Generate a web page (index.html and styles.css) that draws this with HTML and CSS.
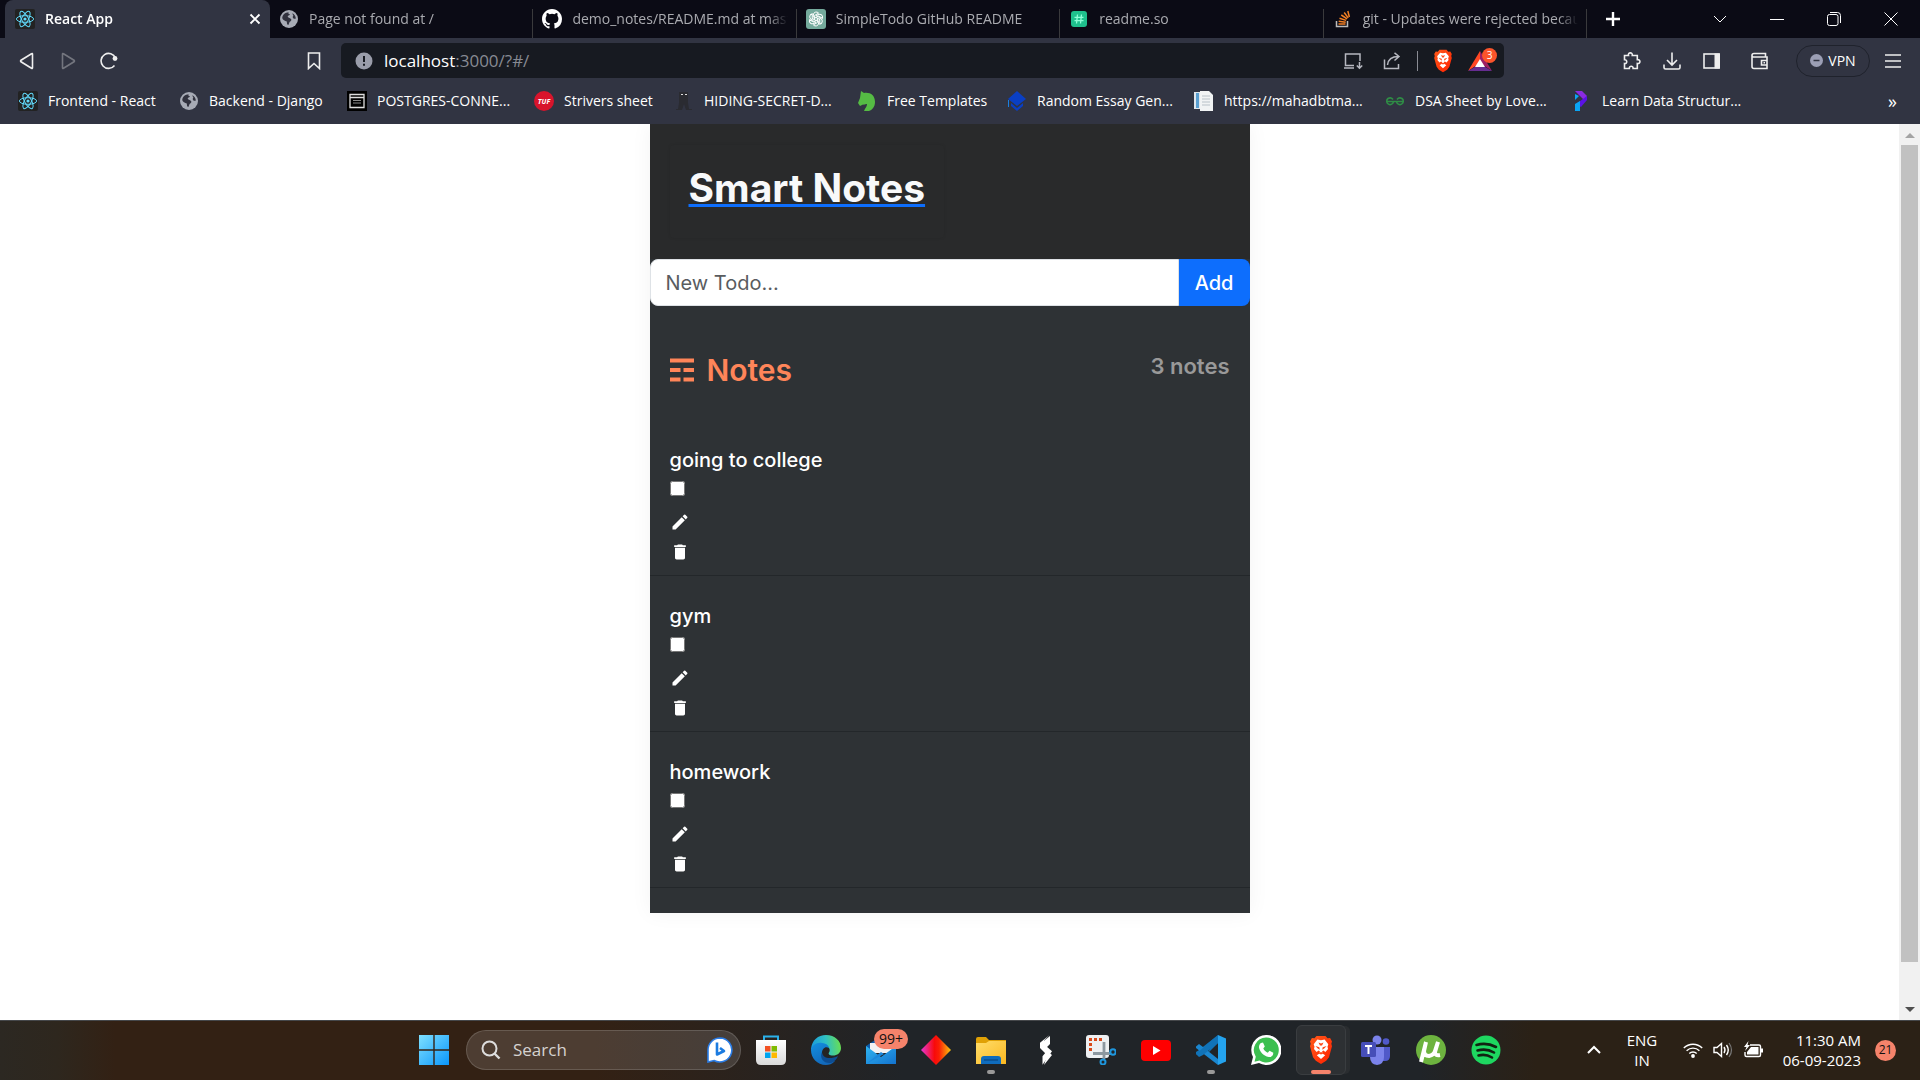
FILE: index.html
```html
<!DOCTYPE html>
<html lang="en">
<head>
<meta charset="utf-8">
<title>React App</title>
<link rel="stylesheet" href="styles.css">
</head>
<body>
<svg class="sprite" width="0" height="0" aria-hidden="true">
  <defs>
    <linearGradient id="winblue" x1="0" y1="0" x2="1" y2="1"><stop offset="0" stop-color="#7fe0ff"/><stop offset="1" stop-color="#0a96fb"/></linearGradient>
    <linearGradient id="edge-a" x1="0" y1="0.4" x2="1" y2="0.3"><stop offset="0" stop-color="#1a9bdc"/><stop offset="0.5" stop-color="#2fc0c4"/><stop offset="1" stop-color="#6be04d"/></linearGradient>
    <linearGradient id="edge-b" x1="0" y1="0" x2="0.6" y2="1"><stop offset="0" stop-color="#1390e0"/><stop offset="1" stop-color="#1266b8"/></linearGradient>
    <linearGradient id="gem" x1="0" y1="0" x2="1" y2="0"><stop offset="0" stop-color="#e438d8"/><stop offset="0.45" stop-color="#f80a0a"/><stop offset="0.6" stop-color="#fa1d05"/><stop offset="1" stop-color="#f9c80e"/></linearGradient>
    <linearGradient id="folder" x1="0" y1="0" x2="1" y2="1"><stop offset="0" stop-color="#ffdd6b"/><stop offset="1" stop-color="#fbb820"/></linearGradient>
    <linearGradient id="mail" x1="0" y1="0" x2="1" y2="1"><stop offset="0" stop-color="#2fb4f0"/><stop offset="1" stop-color="#1373cf"/></linearGradient>
    <linearGradient id="flame" x1="0" y1="0" x2="1" y2="1"><stop offset="0" stop-color="#ff5a1a"/><stop offset="1" stop-color="#ff2000"/></linearGradient>
    <linearGradient id="bag" x1="0" y1="0" x2="0" y2="1"><stop offset="0" stop-color="#ffffff"/><stop offset="1" stop-color="#dadada"/></linearGradient>
  </defs>
  <symbol id="react" viewBox="0 0 20 20">
    <rect width="20" height="20" rx="2" fill="#222"/>
    <g fill="none" stroke="#61dafb" stroke-width="1"><ellipse cx="10" cy="10" rx="8.6" ry="3.3"/><ellipse cx="10" cy="10" rx="8.6" ry="3.3" transform="rotate(60 10 10)"/><ellipse cx="10" cy="10" rx="8.6" ry="3.3" transform="rotate(120 10 10)"/></g>
    <circle cx="10" cy="10" r="1.6" fill="#61dafb"/>
  </symbol>
  <symbol id="globe" viewBox="0 0 20 20">
    <circle cx="10" cy="10" r="9" fill="#a7abb5"/>
    <path d="M10 3.2C8.5 3.5 9.4 5 11 5.2c-.2 1.3-2.3 1-2.3 2.4C8.8 9 11 8.8 12 10c1 1.100 0 2.200-1.200 2.800-.8.6-.6 2.600-1.600 3.200-1.400 0-1.200-2.200-1.400-3.400C5.800 12 4 11 3.300 9.300 3.100 5.900 6.200 3.100 10 3.200zM13.500 4.200c2 1 3.300 3 3.300 5.300-1.300.6-2.600.2-3-1-.2-1.500.8-1.700.4-2.500-.4-.6-1-1-.7-1.800z" fill="#31323e"/>
  </symbol>
  <symbol id="lion" viewBox="0 0 24 30">
    <path d="M7.500 1h9l2 2.300 2.600-.3 1.900 3.400-.7 2.300.7 2.600-3 11-2.800 3.500L12 29l-5.200-3.200L4 22.300 1 11.300l.7-2.600L1 6.400 2.900 3l2.600.3z" fill="url(#flame)"/>
    <path d="M12 5.200l3.600-.6 3.700 4.600-.8 2.600.5 2.100-2.600 3.100-2-1.500-1.200.8.200 2.200 2.800 1.700L12 24l-4.200-3.800 2.800-1.700.2-2.200-1.200-.8-2 1.500L5 13.900l.5-2.100-.8-2.600 3.700-4.600z" fill="#fff"/>
    <path d="M6.500 11l3.800 1.200.5 2.600-2.300-1.600zM17.500 11l-3.800 1.200-.5 2.600 2.300-1.600zM9.500 7.500L12 8.500l2.500-1-1.500 3h-2zM12 17l2.500 1.200L12 19.500l-2.500-1.300z" fill="#ff4514"/>
  </symbol>
  <symbol id="pencil" viewBox="0 0 24 24"><path fill="#fff" d="M3 17.250V21h3.750L17.810 9.940l-3.750-3.750L3 17.250zM20.710 7.040a1 1 0 000-1.410l-2.340-2.340a1 1 0 00-1.410 0l-1.830 1.830 3.750 3.750 1.830-1.830z"/></symbol>
  <symbol id="trash" viewBox="0 0 24 24"><path fill="#fff" d="M6 19c0 1.100.9 2 2 2h8c1.100 0 2-.9 2-2V7H6v12zM19 4h-3.500l-1-1h-5l-1 1H5v2h14V4z"/></symbol>
</svg>

<header class="browser">
  <div class="tabstrip">
    <div class="tabs">
      <div class="tab tab-active"><svg class="fav"><use href="#react"/></svg><span class="tab-title">React App</span>
        <button class="tab-close" aria-label="Close tab"><svg width="12" height="12" viewBox="0 0 12 12"><path d="M1.500 1.500l9 9M10.500 1.500l-9 9" stroke="#fff" stroke-width="1.900"/></svg></button></div>
      <div class="tab"><svg class="fav"><use href="#globe"/></svg><span class="tab-title">Page not found at /</span></div>
      <div class="tab"><svg class="fav" viewBox="0 0 16 16"><path fill="#fff" d="M8 0C3.580 0 0 3.580 0 8c0 3.540 2.290 6.530 5.470 7.590.4.070.55-.17.55-.38 0-.19-.010-.82-.010-1.490-2.010.37-2.530-.49-2.690-.94-.090-.23-.48-.94-.82-1.130-.28-.15-.68-.52-.010-.53.63-.010 1.080.58 1.230.82.72 1.210 1.870.87 2.330.66.070-.52.280-.87.510-1.070-1.780-.2-3.640-.89-3.640-3.950 0-.87.310-1.590.820-2.150-.080-.2-.36-1.020.080-2.120 0 0 .67-.21 2.200.82a7.600 7.600 0 014 0c1.530-1.040 2.200-.82 2.200-.82.44 1.100.16 1.920.080 2.120.51.56.82 1.270.82 2.150 0 3.070-1.870 3.750-3.650 3.950.29.25.54.73.54 1.480 0 1.070-.010 1.930-.010 2.200 0 .21.15.46.55.38A8.010 8.010 0 0016 8c0-4.420-3.580-8-8-8z"/></svg><span class="tab-title">demo_notes/README.md at master</span></div>
      <div class="tab"><svg class="fav" viewBox="0 0 20 20"><rect width="20" height="20" rx="3" fill="#74aa9c"/><g fill="none" stroke="#fff" stroke-width="1"><g id="petal"><path d="M7.300 8.500V6a3 3 0 015.300-1.900L8.600 6.500v4.300"/></g><use href="#petal" transform="rotate(60 10 10)"/><use href="#petal" transform="rotate(120 10 10)"/><use href="#petal" transform="rotate(180 10 10)"/><use href="#petal" transform="rotate(240 10 10)"/><use href="#petal" transform="rotate(300 10 10)"/></g></svg><span class="tab-title">SimpleTodo GitHub README</span></div>
      <div class="tab"><svg class="fav" viewBox="0 0 20 20"><rect x="2" y="2" width="16" height="16" rx="3" fill="#1fc08d"/><path d="M8.500 5.500l-1 9M12.500 5.500l-1 9M5.500 8.300h9M5.500 11.700h9" stroke="#8dffd8" stroke-width="1.300"/></svg><span class="tab-title">readme.so</span></div>
      <div class="tab"><svg class="fav" viewBox="0 0 20 20"><path d="M3.500 12v5.500h11V12" fill="none" stroke="#bcbbbb" stroke-width="1.500"/><path d="M5.500 15h7M5.700 12.300l7 .9M6.500 9.200l6.600 2.200M8.300 6l5.800 3.800M11.200 3.500l4 5.400M14.800 2l1.600 6" stroke="#f48024" stroke-width="1.500"/></svg><span class="tab-title">git - Updates were rejected because</span></div>
    </div>
    <button class="newtab" aria-label="New tab"><svg width="16" height="16" viewBox="0 0 16 16"><path d="M8 1v14M1 8h14" stroke="#fff" stroke-width="2.400"/></svg></button>
    <div class="winctl">
      <button aria-label="Search tabs"><svg width="14" height="14" viewBox="0 0 14 14"><path d="M1 4l6 6 6-6" class="thin"/></svg></button>
      <button aria-label="Minimize"><svg width="14" height="14" viewBox="0 0 14 14"><path d="M0 7.500h14" class="thin"/></svg></button>
      <button aria-label="Restore"><svg width="14" height="14" viewBox="0 0 14 14"><rect x=".5" y="2.500" width="10.500" height="11" rx="2" class="thin"/><path d="M3 .5h7.500a3 3 0 013 3V11" class="thin"/></svg></button>
      <button aria-label="Close"><svg width="14" height="14" viewBox="0 0 14 14"><path d="M.5.500l13 13M13.500.500l-13 13" class="thin"/></svg></button>
    </div>
  </div>

  <div class="toolbar">
    <div class="nav">
      <button aria-label="Back"><svg width="18" height="18" viewBox="0 0 18 18"><path d="M14.500 2.200v13.600q0 1-1 .5L3 9.800q-.9-.8 0-1.600L13.500 1.700q1-.5 1 .5z" class="line"/></svg></button>
      <button aria-label="Forward" class="dim"><svg width="18" height="18" viewBox="0 0 18 18"><path d="M3.500 2.200v13.600q0 1 1 .5L15 9.800q.9-.8 0-1.600L4.500 1.700q-1-.5-1 .5z" class="line"/></svg></button>
      <button aria-label="Reload"><svg width="18" height="18" viewBox="0 0 18 18"><path d="M14.500 13.500A7.500 7.500 0 1 1 15.500 6" class="line"/><circle cx="15" cy="6.500" r="2.400" fill="#eee"/></svg></button>
    </div>
    <button class="bm" aria-label="Bookmark this tab"><svg width="14" height="18" viewBox="0 0 14 18"><path d="M1.500 1h11v15.500L7 11.500l-5.500 5z" class="line"/></svg></button>
    <div class="omnibox">
      <svg width="18" height="18" viewBox="0 0 18 18"><circle cx="9" cy="9" r="8.500" fill="#9a9daa"/><path d="M9 4v6M9 11.800v2" stroke="#171a21" stroke-width="2"/></svg>
      <div class="url"><span class="host">localhost</span>:3000/?#/</div>
      <div class="omni-actions">
        <svg width="20" height="18" viewBox="0 0 20 18"><path d="M17 9V2H2.500v11.500H11M1 16h10M16.500 10v6M13.800 13.500l2.700 2.700 2.700-2.700" class="soft"/></svg>
        <svg width="20" height="18" viewBox="0 0 20 18"><path d="M2.500 7.500v9h14V12M5.500 13c.5-5 3.500-8.500 11-8.500M12.500.8l4.500 3.700-4.500 4" class="soft"/></svg>
        <i class="divider"></i>
        <svg width="20" height="24" viewBox="0 0 24 30"><use href="#lion"/></svg>
        <div class="rewards"><svg width="24" height="20" viewBox="0 0 24 20"><path d="M12 0L0 20l12-8z" fill="#ff4724"/><path d="M12 0l12 20-12-8z" fill="#9e1f63"/><path d="M0 20h24l-12-7z" fill="#662d91"/><path d="M12 8l5 8H7z" fill="#fff"/></svg><span class="count">3</span></div>
      </div>
    </div>
    <div class="tools">
      <svg width="20" height="20" viewBox="0 0 20 20"><path d="M2.500 4.500h4c-1-3.500 4.500-3.500 3.800 0h5v4.200c3.500-.5 3.500 4.300 0 3.800v5h-4.200c.3-3-4-3-3.800 0H2.500v-5c3 .4 3-4 0-3.800z" class="line"/></svg>
      <svg width="20" height="20" viewBox="0 0 20 20"><path d="M10 1.500v12M5 9l5 5 5-5M2 13.500v3q0 1.500 1.500 1.500h13q1.500 0 1.500-1.500v-3" class="line"/></svg>
      <svg width="20" height="20" viewBox="0 0 20 20"><rect x="2" y="3" width="15" height="14" class="line"/><path d="M12.500 2.500H18v15h-5.500z" fill="#eee"/></svg>
      <svg class="wallet" width="20" height="20" viewBox="0 0 20 20"><path d="M2 4v11.500q0 2 2 2h13V6H3.500Q2 6 2 4.200 2 2.500 4 2.500h11.500V6M17 9.500h-5.500v4.500H17M13.500 11.700h1.500" class="line"/></svg>
      <button class="vpn"><svg width="13" height="13" viewBox="0 0 13 13"><circle cx="6.500" cy="6.500" r="6.500" fill="#9c9fb5"/><path d="M3.500 6.500h6" stroke="#313442" stroke-width="1.500"/></svg>VPN</button>
      <svg width="18" height="18" viewBox="0 0 18 18"><path d="M1 3h16M1 9h16M1 15h16" class="line"/></svg>
    </div>
  </div>

  <nav class="bookmarks">
    <a href="#"><svg class="fav"><use href="#react"/></svg>Frontend - React</a>
    <a href="#"><svg class="fav"><use href="#globe"/></svg>Backend - Django</a>
    <a href="#"><svg class="fav" viewBox="0 0 20 20"><path d="M0 0h20v20H0z" fill="#000"/><path d="M3 3.500h14v13H3zM3 6.500h14" fill="none" stroke="#ddd" stroke-width="1.300"/><path d="M6 9.500h8M6 12h8" stroke="#888" stroke-width="1"/></svg>POSTGRES-CONNE...</a>
    <a href="#"><svg class="fav" viewBox="0 0 20 20"><circle cx="10" cy="10" r="10" fill="#d8142c"/><text x="10" y="12.500" class="tuf">TUF</text></svg>Strivers sheet</a>
    <a href="#"><svg class="fav" viewBox="0 0 20 20"><path d="M5 1h9v11l1 6h3v1h-6l-2-6-2 6H2v-1h2l1-6z" fill="#2a2b31"/><path d="M7 3.500h2M11 3.500h2" stroke="#ddd" stroke-width="1.200"/></svg>HIDING-SECRET-D...</a>
    <a href="#"><svg class="fav" viewBox="0 0 20 20"><path d="M4 0l3 2c6-1 11 2 11 9 0 5-3 8-6 9H7c1-3 3-4 3-7-1 0-3 1-4 .5L3 15l-2-3 2-5z" fill="#55bb44"/></svg>Free Templates</a>
    <a href="#"><svg class="fav" viewBox="0 0 20 20"><path d="M10 0l9 8-9 7-9-7zM4 12l6 5 6-5v3l-6 5-6-5z" fill="#0a3fc4"/><path d="M1.500 9v7" stroke="#1a7fe0"/></svg>Random Essay Gen...</a>
    <a href="#"><svg class="fav" viewBox="0 0 20 20"><path d="M0 1h14v17H0z" fill="#dfe6ec"/><path d="M2 2h3v15H2z" fill="#5a9fd0"/><path d="M6 0h9l4 4v16H6z" fill="#f1f3f4"/><path d="M8 5h8M8 8h8M8 11h8M8 14h8" stroke="#b8c1c8"/></svg>https://mahadbtma...</a>
    <a href="#"><svg class="fav" viewBox="0 0 20 20"><path d="M1 10.500h18M8.500 10.500a3.400 3.400 0 11-5.500-3q3-1.500 5 1M11.500 10.500a3.400 3.400 0 105.500-3q-3-1.500-5 1" fill="none" stroke="#2f8d46" stroke-width="1.600"/></svg>DSA Sheet by Love...</a>
    <a href="#"><svg class="fav" viewBox="0 0 20 20"><path d="M3 0h7l5 5-3 4z" fill="#8a2be2"/><path d="M15 5v4l-6 7-5-3z" fill="#5b12e6"/><path d="M3 13l5-3v10H3z" fill="#0aa5f5"/><path d="M3 3l4 2-4 4z" fill="#0aa5f5"/></svg>Learn Data Structur...</a>
    <button class="more" aria-label="More bookmarks">»</button>
  </nav>
</header>

<div class="viewport">
  <main class="page">
    <section class="card">
      <div class="hero"><div class="brand"><h1>Smart Notes</h1></div></div>
      <form class="add">
        <input type="text" placeholder="New Todo..." aria-label="New Todo">
        <button type="button">Add</button>
      </form>
      <div class="heading">
        <h2><svg width="24" height="24" viewBox="0 0 24 24"><path d="M0 2.500h24M0 12h10.500M13.500 12H24M0 21.500h10.500M13.500 21.500H24" stroke="#ff8559" stroke-width="4"/></svg>Notes</h2>
        <p>3 notes</p>
      </div>
      <ul class="notes">
        <li><label for="n1">going to college</label><input type="checkbox" id="n1"><button aria-label="Edit"><svg class="ico"><use href="#pencil"/></svg></button><button aria-label="Delete"><svg class="ico"><use href="#trash"/></svg></button></li>
        <li><label for="n2">gym</label><input type="checkbox" id="n2"><button aria-label="Edit"><svg class="ico"><use href="#pencil"/></svg></button><button aria-label="Delete"><svg class="ico"><use href="#trash"/></svg></button></li>
        <li><label for="n3">homework</label><input type="checkbox" id="n3"><button aria-label="Edit"><svg class="ico"><use href="#pencil"/></svg></button><button aria-label="Delete"><svg class="ico"><use href="#trash"/></svg></button></li>
      </ul>
    </section>
  </main>
  <div class="scrollbar">
    <svg width="10" height="6" viewBox="0 0 10 6"><path d="M5 0l5 5H0z" fill="#a3a3a3"/></svg>
    <div class="thumb"></div>
    <svg width="10" height="6" viewBox="0 0 10 6"><path d="M0 0h10L5 5z" fill="#505050"/></svg>
  </div>
</div>

<footer class="taskbar">
  <div class="apps">
    <svg class="app" viewBox="0 0 30 30"><path d="M0 0h14.300v14.300H0zM15.700 0H30v14.300H15.700zM0 15.700h14.300V30H0zM15.700 15.700H30V30H15.700z" fill="url(#winblue)"/></svg>
    <label class="search"><svg width="20" height="20" viewBox="0 0 20 20"><circle cx="8.500" cy="8.500" r="7" fill="none" stroke="#ddd" stroke-width="2"/><path d="M13.500 13.500l5 5" stroke="#ddd" stroke-width="2.400"/></svg>
      <input type="text" placeholder="Search" aria-label="Search">
      <svg width="26" height="26" viewBox="0 0 26 26"><path d="M13 1a12 12 0 11-6 22.500L1 25V13A12 12 0 0113 1z" fill="#fff" stroke="#2a7de8" stroke-width="1.600"/><path d="M10 5.500v12l7-3.500-4-3" fill="none" stroke="#1b7be0" stroke-width="2.600" stroke-linejoin="round"/></svg></label>
    <svg class="app" viewBox="0 0 30 30"><path d="M8 6V1.500h14V6" fill="none" stroke="#2bb1ea" stroke-width="2"/><path d="M0 5h30v20q0 5-5 5H5q-5 0-5-5z" fill="url(#bag)"/><path d="M9 11h5.500v5.500H9z" fill="#f25022"/><path d="M15.500 11H21v5.500h-5.500z" fill="#7fba00"/><path d="M9 17.500h5.500V23H9z" fill="#00a4ef"/><path d="M15.500 17.500H21V23h-5.500z" fill="#ffb900"/></svg>
    <svg class="app" viewBox="0 0 30 30"><path d="M0 14C1 5 7 0 15 0c9 0 15 6 15 13 0 5-4 7.500-8 7.500-4 0-5-1.500-4-3 1.500-2 1-6-4-7C8 9 2 11 0 16z" fill="url(#edge-a)"/><path d="M0 15c1-5 6-8 11-7 5 .5 7 3 7 5-4-2-7 1-7 5 0 6 6 9.500 13 8-3 3-6 4-9 4C6 30 0 23 0 15z" fill="url(#edge-b)"/><path d="M11 17c0 6 8 8 16 4-1 3-4 6-7 7-7 1-12-5-9-11z" fill="#0d4d92"/></svg>
    <div class="app badge-host"><svg class="app" viewBox="0 0 30 30"><path d="M0 11L15 1l15 10v5H0z" fill="#0c5cab"/><path d="M4 8h22v10H4z" fill="#f2f2f2"/><path d="M0 11l15 11 15-11v18H0z" fill="url(#mail)"/><path d="M0 29l15-12 3 2z" fill="#1b87dc"/></svg><span class="badge">99+</span></div>
    <svg class="app" viewBox="0 0 30 30"><path d="M15 0l15 15-15 15L0 15z" fill="url(#gem)"/></svg>
    <div class="app run"><svg class="app" viewBox="0 0 30 30"><path d="M0 4q0-2 2-2h8l3 3H30v6H0z" fill="#e0a106"/><path d="M0 8h10l3-2h17v23H0z" fill="url(#folder)"/><path d="M5 29v-5q0-3 3-3h14q3 0 3 3v5z" fill="#0f6cbd"/><path d="M8 25h14" stroke="#083f76"/></svg></div>
    <svg class="app" viewBox="0 0 30 30"><path d="M18.500 0L13 6.500V11L21 19l-9.500 16V25l3.500-5-6-6V9z" transform="scale(1 .85)" fill="#fff"/><path d="M19 1v8l-5 5 7 6-8 10 3-10-7-7V9z" fill="#fff"/></svg>
    <svg class="app" viewBox="0 0 30 30"><rect width="23" height="23" rx="3" fill="#eef0f2"/><path d="M4.500 16V4.500H17" fill="none" stroke="#d84a1b" stroke-width="3" stroke-dasharray="3 2"/><path d="M18 7v17M7 18.500h18" stroke="#8d98a0" stroke-width="2.800"/><circle cx="27" cy="17" r="2.700" fill="none" stroke="#1e96dd" stroke-width="2"/><circle cx="17" cy="27" r="2.500" fill="none" stroke="#1e96dd" stroke-width="2"/></svg>
    <svg class="app" viewBox="0 0 30 30"><rect y="5" width="30" height="21" rx="4" fill="#f00"/><path d="M12 11l7.500 4.500L12 20z" fill="#fff"/></svg>
    <div class="app run"><svg class="app" viewBox="0 0 30 30"><path d="M22 0L7 17l-4 4-3-2v-2l3-2L22 0v8L11 19z" fill="#1173b8"/><path d="M0 11.500L3 9l4 3 15 12v6L0 13z" fill="#1a86cf"/><path d="M22 0v8L7 20l-4 2-3-3z" fill="#1173b8"/><path d="M22 0l8 3.500v23L22 30z" fill="#24a3ee"/></svg></div>
    <svg class="app" viewBox="0 0 30 30"><path d="M15 0a15 15 0 11-7 28L0 30l2-8A15 15 0 0115 0z" fill="#fff"/><path d="M15 2.500A12.500 12.500 0 118.500 25.500l-5 1.200 1.300-5A12.500 12.500 0 0115 2.500z" fill="#3cbf50"/><path d="M10 8l2-.5 1.800 4-1.500 2c1 2 2.500 3.500 4.500 4.300l1.700-2 3.800 2c0 3-2 4.500-4.500 4.200C12 21 8.500 16 8 12.500 7.800 10.500 9 8.500 10 8z" fill="#fff"/></svg>
    <div class="active-app"><svg class="app" viewBox="0 0 24 30"><use href="#lion"/></svg></div>
    <svg class="app" viewBox="0 0 30 30"><circle cx="16" cy="5" r="4.500" fill="#7b83eb"/><circle cx="25" cy="6.500" r="3.300" fill="#5059c9"/><path d="M20 12h9v9q0 5-5 5h-4z" fill="#5059c9"/><path d="M9 12h14v10q0 7-7 8-7-1-7-8z" fill="#7b83eb"/><rect y="7" width="15" height="15" rx="1.500" fill="#464eb8"/><path d="M4 11h7M7.500 11v8" stroke="#fff" stroke-width="2"/></svg>
    <svg class="app" viewBox="0 0 30 30"><circle cx="15" cy="15" r="15" fill="#6db33f"/><path d="M10 7L5 27M10 7L8 16q0 5 5 5 5-1 6-5l3-9-3 10q0 4 5 3" fill="none" stroke="#fff" stroke-width="4"/></svg>
    <svg class="app" viewBox="0 0 30 30"><circle cx="15" cy="15" r="14.500" fill="#1ed760"/><path d="M5.500 10q10-3 19.500 2M6.500 15.500q9-2.500 16.500 2M7.500 20.500q7-2 13.500 2" fill="none" stroke="#121" stroke-width="2.600" stroke-linecap="round"/></svg>
  </div>
  <div class="tray">
    <svg width="14" height="10" viewBox="0 0 14 10"><path d="M1 8l6-6 6 6" fill="none" stroke="#fff" stroke-width="2"/></svg>
    <div class="lang">ENG<br>IN</div>
    <div class="status">
      <svg width="20" height="16" viewBox="0 0 20 16"><g fill="none" stroke="#fff" stroke-width="1.400"><path d="M.8 6a13 13 0 0118.400 0M3.600 8.800a9 9 0 0112.800 0M6.300 11.500a5.200 5.200 0 017.400 0"/></g><circle cx="10" cy="14" r="1.900" fill="#fff"/></svg>
      <svg width="20" height="18" viewBox="0 0 20 18"><path d="M1 6.500h3l4.500-4v13l-4.500-4H1z" fill="none" stroke="#fff" stroke-width="1.400"/><path d="M11 6q2 3 0 6M13.500 4q3.500 5 0 10" fill="none" stroke="#fff" stroke-width="1.400"/><path d="M16 2q5 7 0 14" fill="none" stroke="#777" stroke-width="1.200"/></svg>
      <svg width="20" height="18" viewBox="0 0 20 18"><path d="M7 4h9q1.500 0 1.500 1.500v8.500q0 1.500-1.500 1.500H3.500Q2 15.500 2 14v-3" fill="none" stroke="#fff" stroke-width="1.400"/><path d="M8 6h7.500v7.500H4V11zM18 7.500h2v4h-2zM5.500 0L1 6h2.500L2 10l5-6H4.500z" fill="#fff"/></svg>
    </div>
    <div class="clock">11:30 AM<br>06-09-2023</div>
    <span class="alerts">21</span>
  </div>
</footer>
</body>
</html>
```
FILE: styles.css
```css
* { box-sizing: border-box; }
html, body { height: 100%; margin: 0; }
body {
  display: flex;
  flex-direction: column;
  overflow: hidden;
  background: #fff;
  font: 14px/20px "Open Sans", "Noto Sans", sans-serif;
  color: #fff;
}
button { border: 0; padding: 0; background: none; color: inherit; font: inherit; display: flex; align-items: center; justify-content: center; }
svg { display: block; flex: none; }
a { color: inherit; text-decoration: none; }
.sprite { position: absolute; }
.fav { width: 20px; height: 20px; }
.thin { fill: none; stroke: #fff; stroke-width: 1; }
.line { fill: none; stroke: #eee; stroke-width: 1.600; }
.soft { fill: none; stroke: #b6b8c0; stroke-width: 1.500; }
.dim { opacity: .35; }

/* Browser frame */
.browser { background: #313442; flex: none; height: 124px; }
.tabstrip { display: flex; height: 38px; background: #0b0b15; padding-left: 5px; }
.tabs { display: flex; flex: 0 1 1582px; min-width: 0; }
.tab {
  flex: 1 1 0;
  min-width: 0;
  display: flex;
  align-items: center;
  gap: 10px;
  padding: 0 9px 0 9px;
  color: #aaabb0;
  background: linear-gradient(#3a3a3c, #3a3a3c) right bottom / 1px 29px no-repeat;
}
.tab-active { flex: 0 1 265px; padding-left: 10px; background: #313442; border-radius: 8px 8px 0 0; color: #fff; font-weight: 600; }
.tab-title {
  flex: 1;
  white-space: nowrap;
  overflow: hidden;
  -webkit-mask-image: linear-gradient(90deg, #000 calc(100% - 20px), transparent);
  mask-image: linear-gradient(90deg, #000 calc(100% - 20px), transparent);
}
.newtab { width: 52px; }
.winctl { display: flex; margin-left: auto; padding-right: 1px; }
.winctl button { width: 57px; }

.toolbar { display: flex; align-items: center; height: 45px; padding: 0 18px; }
.nav { display: flex; gap: 23px; }
.bm { margin-left: 189px; }
.omnibox {
  flex: 1;
  display: flex;
  align-items: center;
  height: 35px;
  margin-left: 20px;
  padding: 0 4px 0 14px;
  border-radius: 5px;
  background: #171a21;
}
.url { flex: 1; margin-left: 11px; color: #878a93; font-size: 17px; }
.host { color: #fff; }
.omni-actions { display: flex; align-items: center; gap: 15px; }
.omni-actions > :first-child { margin-right: 4px; }
.divider { width: 1px; height: 20px; background: #8a8c94; }
.rewards { position: relative; width: 32px; }
.count {
  position: absolute;
  top: -3px;
  right: 3px;
  width: 15px;
  height: 15px;
  border-radius: 8px;
  background: #fb542b;
  font-size: 10px;
  line-height: 15px;
  text-align: center;
}
.tools { display: flex; align-items: center; gap: 20px; margin-left: 118px; }
.wallet { margin-left: 8px; }
.vpn { gap: 5px; width: 74px; height: 32px; border: 1px solid #1f222c; border-radius: 16px; margin: 0 -6px 0 6px; }

.bookmarks {
  display: grid;
  grid-template-columns: 161px 168px 187px 140px 183px 150px 187px 191px 187px 1fr auto;
  align-items: center;
  height: 35px;
  padding: 0 23px 0 18px;
}
.bookmarks a { display: flex; align-items: center; gap: 10px; white-space: nowrap; }
.tuf { fill: #fff; font: italic 700 7px "Open Sans", sans-serif; text-anchor: middle; }
.more { font-size: 18px; }

/* Page */
.viewport { flex: 1; display: flex; min-height: 0; }
.page { flex: 1; overflow: hidden; font-family: Inter, "Noto Sans", sans-serif; }
.card {
  max-width: 600px;
  margin: 0 auto;
  padding-bottom: 25px;
  background: #2e3235;
  box-shadow: 0 0 20px rgba(0, 0, 0, .05);
}
.hero { display: flex; padding: 21px 20px; background: #292a2b; }
.brand { padding: 19px 19px 26px; border-radius: 4px; box-shadow: 0 0 3px rgba(0, 0, 0, .1); }
h1, h2, p, ul { margin: 0; padding: 0; }
h1 {
  font-size: 39px;
  line-height: 48px;
  font-weight: 700;
  color: #f8f9fa;
  text-decoration: underline #0d6efd 3px;
  text-underline-offset: 2px;
  text-decoration-skip-ink: none;
}
.add { display: flex; height: 47px; }
.add input {
  flex: 1;
  min-width: 0;
  border: 1px solid #dee2e6;
  border-radius: 8px 0 0 8px;
  padding: 0 15px;
  background: #fff;
  font: 20px/30px Inter, sans-serif;
}
.add input::placeholder { color: #595c5f; opacity: 1; }
.add button { width: 71px; background: #0d6efd; border-radius: 0 8px 8px 0; font-size: 20px; font-weight: 500; }
.heading { display: flex; justify-content: space-between; align-items: flex-start; padding: 44px 20px 30px; }
h2 { display: flex; align-items: center; gap: 13px; font-size: 30px; line-height: 40px; font-weight: 600; color: #ff8559; }
.heading p { font-size: 22px; line-height: 32px; font-weight: 600; color: #999; }
.notes { list-style: none; }
.notes li {
  display: flex;
  flex-direction: column;
  align-items: flex-start;
  padding: 25px 20px 8px;
  border-bottom: 1px solid #23272a;
}
.notes label { font-size: 20px; line-height: 30px; font-weight: 500; }
.notes input { width: 15px; height: 15px; margin: 6px 0 11px; }
.notes button { width: 20px; height: 30px; }
.ico { width: 20px; height: 20px; }
.scrollbar {
  width: 21px;
  display: flex;
  flex-direction: column;
  align-items: center;
  padding: 9px 0 7px;
  background: #f1f1f1;
}
.thumb { width: 17px; height: 817px; margin: 6px 0 auto; background: #c1c1c1; }

/* Taskbar */
.taskbar {
  flex: none;
  display: flex;
  align-items: center;
  height: 60px;
  padding-bottom: 1px;
  border-top: 1px solid #45474a;
  background: linear-gradient(90deg, #2c2822 0, #2e271e 3%, #332114 6%, #332114 31%, #202428 47%, #202428 74%, #2b2116 80%, #2b2116);
}
.apps { display: flex; align-items: center; gap: 25px; margin-left: 419px; }
.app { width: 30px; height: 30px; }
.search {
  display: flex;
  align-items: center;
  gap: 12px;
  width: 275px;
  height: 40px;
  margin: 0 -10px 0 -8px;
  padding: 0 7px 0 14px;
  border: 1px solid rgba(255, 255, 255, .15);
  border-radius: 20px;
  background: rgba(255, 255, 255, .13);
}
.search input { flex: 1; min-width: 0; border: 0; padding: 0; background: none; font: 17px/24px "Open Sans", sans-serif; }
.search input::placeholder { color: #d5d2d0; opacity: 1; }
.badge-host, .run { position: relative; }
.badge {
  position: absolute;
  top: -6px;
  left: 8px;
  width: 34px;
  height: 20px;
  border-radius: 10px;
  background: #f5836b;
  color: #111;
  text-align: center;
}
.run::after, .active-app::after {
  content: "";
  position: absolute;
  left: 50%;
  bottom: -9px;
  width: 8px;
  height: 4px;
  margin-left: -4px;
  border-radius: 2px;
  background: #999;
}
.active-app {
  position: relative;
  display: flex;
  align-items: center;
  justify-content: center;
  width: 50px;
  height: 50px;
  margin: 0 -10px;
  border: 1px solid #3a3d40;
  border-radius: 6px;
  background: #2d3033;
  box-shadow: 5px 0 0 -1px #2a2d30;
}
.active-app::after { bottom: 0; width: 20px; margin-left: -10px; background: #f5836b; }
.tray { display: flex; align-items: center; margin-left: auto; padding-right: 24px; }
.lang { width: 82px; text-align: center; }
.status { display: flex; align-items: center; gap: 10px; }
.clock { width: 98px; text-align: right; }
.alerts { width: 21px; height: 21px; margin-left: 14px; border-radius: 11px; background: #f5836b; color: #111; font-size: 12px; line-height: 20px; text-align: center; }
.lang, .clock { font-size: 15px; }
```
